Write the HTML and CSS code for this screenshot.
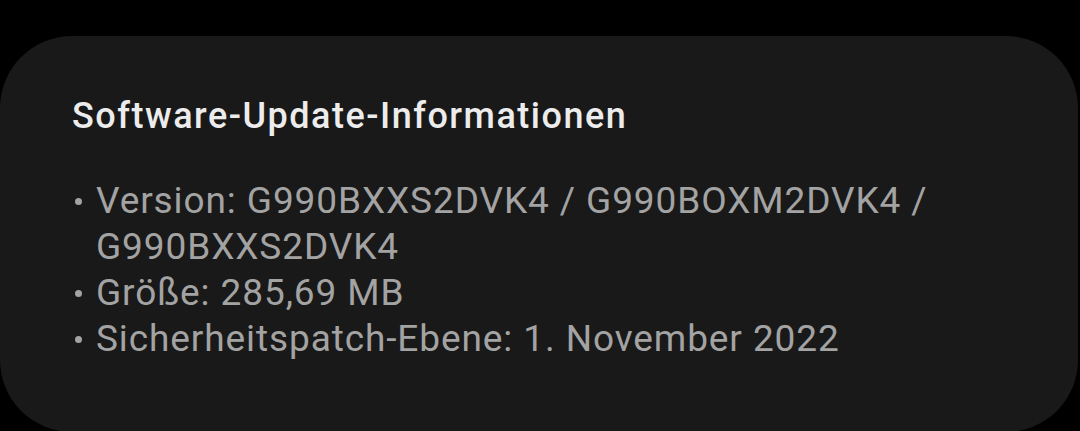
FILE: index.html
```html
<!DOCTYPE html>
<html lang="de">

<head>
    <meta charset="UTF-8" />
    <meta name="viewport" content="width=device-width, initial-scale=1.0" />
    <title>Software-Update</title>
    <link rel="stylesheet" href="styles.css">
</head>

<body>

    <div class="card">
        <h1 class="card-title">Software-Update-Informationen</h1>
        <ul class="info-list">
            <li>Version: G990BXXS2DVK4 / G990BOXM2DVK4 / G990BXXS2DVK4</li>
            <li>Größe: 285,69 MB</li>
            <li>Sicherheitspatch-Ebene: 1. November 2022</li>
        </ul>
    </div>

</body>

</html>
```

FILE: styles.css
```css
html,
body {
    margin: 0;
    background: #000;
}

body {
    font-family: Roboto, 'Noto Sans', sans-serif;
    padding-top: 36px;
    height: 431px;
    box-sizing: border-box;
    overflow: hidden;
}

.card {
    background-color: #191919;
    width: 1078px;
    height: 396px;
    border-radius: 72px;
    padding: 60px 72px 0 72px;
    box-sizing: border-box;
}

.card-title {
    margin: 0;
    color: #ececec;
    font-size: 36px;
    font-weight: 500;
    letter-spacing: 1.5px;
    line-height: 40px;
}

.info-list {
    list-style: none;
    margin: 42px 0 0 0;
    padding: 0;
    color: #a3a3a3;
    font-size: 37px;
    letter-spacing: 0.9px;
    line-height: 46px;
}

.info-list li {
    display: flex;
}

.info-list li::before {
    content: "";
    flex-shrink: 0;
    width: 7px;
    height: 7px;
    border-radius: 50%;
    background: #a3a3a3;
    margin: 20px 14px 0 3px;
}
```
